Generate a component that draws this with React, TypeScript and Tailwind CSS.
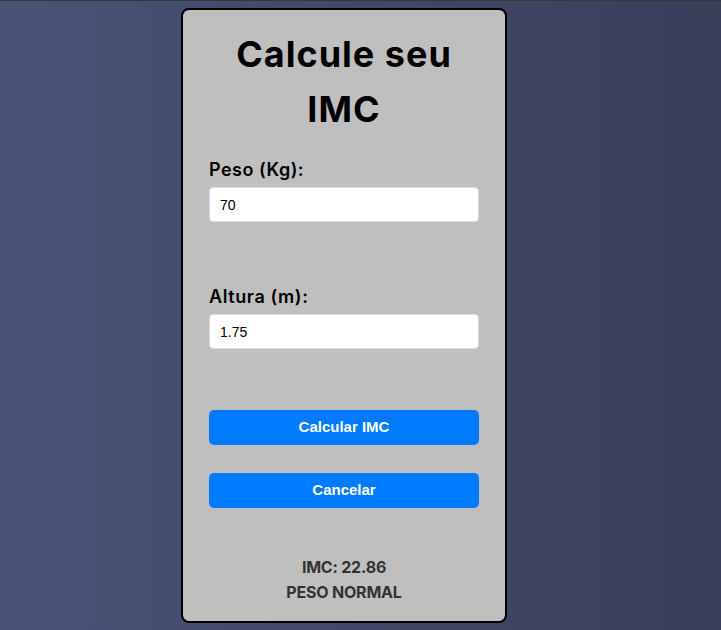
import React, { useState } from 'react';

const poppins = { fontFamily: 'Inter, "Noto Sans", sans-serif' };
const arial = { fontFamily: '"Liberation Sans", Arial, sans-serif' };

export default function App() {
    const [peso, setPeso] = useState('70');
    const [altura, setAltura] = useState('1.75');

    return (
        <div className="min-h-[630px] w-full border-t border-[#383838] bg-gradient-to-r from-[#4a5276] to-[#393f59] pt-[7px]">
            <div
                className="ml-[181px] w-[326px] h-[615px] rounded-lg border-2 border-black bg-[#bfbfbf] px-[26px] pt-[17px] flex flex-col"
                style={poppins}
            >
                <h1 className="text-center text-[36px] leading-[55px] font-bold text-black tracking-[1px]">
                    Calcule seu IMC
                </h1>

                <label className="mt-[19px] text-[18px] leading-[27px] font-semibold text-black tracking-[0.5px]">Peso (Kg):</label>
                <input
                    value={peso}
                    onChange={(e) => setPeso(e.target.value)}
                    className="mt-[4px] h-[35px] w-full rounded border border-[#dcdcdc] bg-white px-[10px] text-[14px] text-black outline-none"
                    style={arial}
                />

                <label className="mt-[61px] text-[18px] leading-[27px] font-semibold text-black tracking-[0.6px]">Altura (m):</label>
                <input
                    value={altura}
                    onChange={(e) => setAltura(e.target.value)}
                    className="mt-[4px] h-[35px] w-full rounded border border-[#dcdcdc] bg-white px-[10px] text-[14px] text-black outline-none"
                    style={arial}
                />

                <button
                    className="mt-[61px] h-[35px] w-full rounded-[5px] bg-[#007bff] text-[15px] font-bold text-white"
                    style={arial}
                >
                    Calcular IMC
                </button>
                <button
                    className="mt-[28px] h-[35px] w-full rounded-[5px] bg-[#007bff] text-[15px] font-bold text-white"
                    style={arial}
                >
                    Cancelar
                </button>

                <div className="mt-[47px] text-center text-[16px] leading-[25px] font-bold text-[#333] tracking-[-0.2px]">
                    <p>IMC: 22.86</p>
                    <p>PESO NORMAL</p>
                </div>
            </div>
        </div>
    );
}
